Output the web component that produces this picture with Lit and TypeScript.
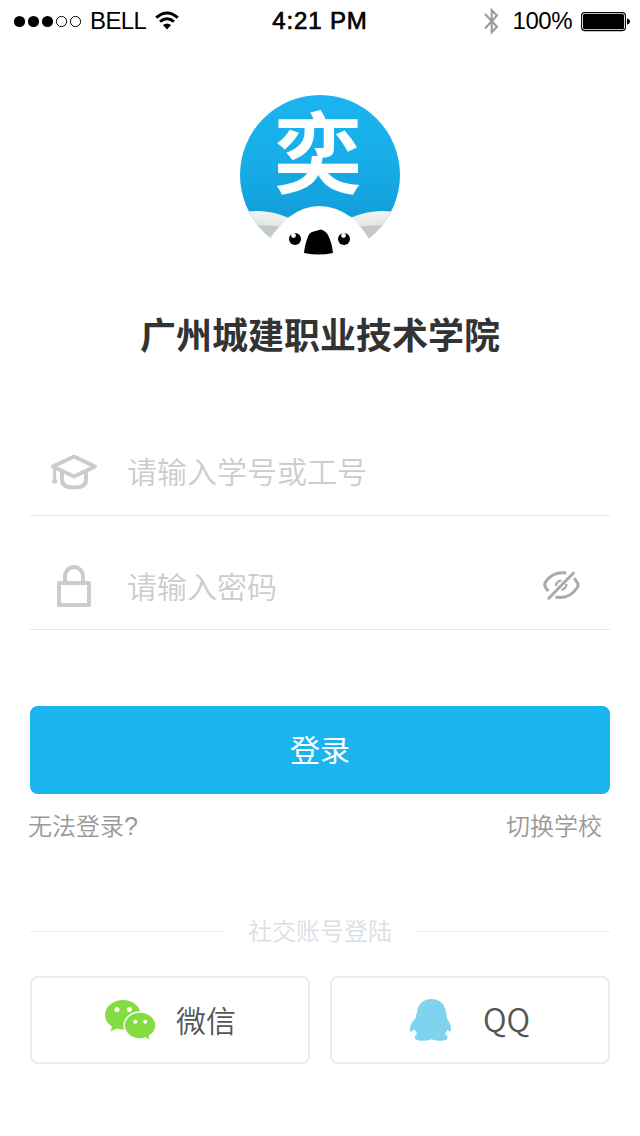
import { LitElement, html, css } from "lit";
import { customElement } from "lit/decorators.js";

@customElement("status-bar")
class StatusBar extends LitElement {
  static styles = css`
    :host { display: block; height: 40px; color: #000; font: 24px/40px "Liberation Sans", Arial, sans-serif; }
    .bar { display: grid; grid-template-columns: 1fr auto 1fr; height: 40px; }
    .left, .right { display: flex; align-items: center; }
    .left { padding-left: 13px; }
    .right { justify-content: flex-end; padding-right: 10px; }
    .dots { margin-right: 7px; }
    .carrier { padding-top: 1px; letter-spacing: -0.6px; }
    .wifi { margin-left: 8px; }
    .time { padding-top: 1px; letter-spacing: 0.85px; -webkit-text-stroke: 0.7px #000; }
    .percent { padding-top: 1px; margin: 0 9px 0 13px; letter-spacing: -0.5px; }
    svg { display: block; flex: none; }
  `;
  render() {
    return html`<div class="bar">
      <div class="left">
        <svg class="dots" width="70" height="40" viewBox="0 0 70 40">
          <circle cx="6.5" cy="20.5" r="5.6" /><circle cx="20.5" cy="20.5" r="5.6" /><circle cx="34.5" cy="20.5" r="5.6" />
          <g fill="none" stroke="#000"><circle cx="48.5" cy="20.5" r="5.1" /><circle cx="62.5" cy="20.5" r="5.1" /></g>
        </svg>
        <span class="carrier">BELL</span>
        <svg class="wifi" width="26" height="40" viewBox="0 0 26 40">
          <g fill="none" stroke="#000" stroke-width="2.9">
            <path d="M2.2 16.7Q13 7.2 23.8 16.7" /><path d="M6 20.7Q13 14.6 20 20.7" />
          </g>
          <path d="M8.9 24.1Q13 21 17.1 24.1L13 28.6Z" />
        </svg>
      </div>
      <span class="time">4:21 PM</span>
      <div class="right">
        <svg width="16" height="40" viewBox="0 0 16 40">
          <path d="M1 13L13 25.800 7.700 31.200V9.200L13 14.500 1 27.500" fill="none" stroke="#999" stroke-width="2" />
        </svg>
        <span class="percent">100%</span>
        <svg width="49" height="40" viewBox="0 0 49 40">
          <rect x=".6" y="11.6" width="43.8" height="18" rx="3" fill="none" stroke="#000" stroke-width="1.1" />
          <rect x="2" y="13" width="41" height="15.2" rx="1.5" />
          <path d="M46 17.5Q49 18.3 49 20.6T46 23.8Z" />
        </svg>
      </div>
    </div>`;
  }
}

@customElement("app-root")
class AppRoot extends LitElement {
  static styles = css`
    :host {
      display: block; width: 640px; height: 1136px; overflow: hidden; background: #fff;
      font-family: "Noto Sans CJK SC", sans-serif; font-weight: 350;
    }
    svg { display: block; flex: none; }
    .logo { margin: 55px auto 0; overflow: visible; }
    .mark { font: 700 88px "Noto Sans CJK SC", sans-serif; }
    h1 { margin: 52px 0 0; font-size: 36px; line-height: 52px; font-weight: 700; color: #333; text-align: center; }
    form { margin: 71px 30px 0; }
    .field { display: flex; align-items: center; box-sizing: border-box; border-bottom: 1px solid #e5e5e5; }
    .account { height: 86px; padding-bottom: 2px; }
    .password { height: 114px; padding-top: 26px; }
    .icon { margin-left: 20px; margin-right: 29px; }
    input {
      flex: 1; min-width: 0; height: 60px; padding: 0 0 3px; box-sizing: border-box; border: 0; outline: 0; background: none;
      font: inherit; font-size: 30px; color: #333;
    }
    .password input { padding-bottom: 1px; }
    input::placeholder { color: #ccc; opacity: 1; }
    .eye { margin-right: 29px; margin-bottom: 4px; }
    .login {
      display: block; width: 100%; height: 88px; margin-top: 76px; padding: 0 0 3px; border: 0; border-radius: 8px;
      background: #1ab4ef; color: #fff; font: inherit; font-weight: 400; font-size: 30px; line-height: 85px;
    }
    .links { display: flex; justify-content: space-between; height: 36px; margin: 13px 38px 0 28px; font-size: 24px; line-height: 36px; color: #999; }
    .query { font-family: "Liberation Sans", Arial, sans-serif; font-size: 25px; line-height: 1; }
    .divider { display: flex; align-items: center; gap: 25px; height: 36px; margin: 70px 30px 0; font-size: 24px; line-height: 34px; color: #d8e0e6; }
    .caption { padding-bottom: 2px; }
    .rule { flex: 1; height: 1px; background: #e8edf1; }
    .social { display: grid; grid-template-columns: 1fr 1fr; gap: 20px; margin: 27px 30px 0; }
    .provider {
      display: flex; align-items: center; box-sizing: border-box; height: 88px; border: 2px solid #e8edf1;
      border-radius: 8px; font-size: 30px; line-height: 44px; color: #555;
    }
    .name { padding-bottom: 3px; }
    .wechat { padding-left: 73px; gap: 20px; }
    .qq { padding-left: 77px; gap: 31px; }
    .qq .name { font-size: 32px; padding-bottom: 5px; }
  `;
  render() {
    return html`
      <status-bar></status-bar>
      <svg class="logo" width="160" height="160" viewBox="0 0 160 160">
        <defs>
          <linearGradient id="sky" x2="0" y2="1"><stop stop-color="#1bb4ef" /><stop offset=".35" stop-color="#18afe9" /><stop offset=".75" stop-color="#129fda" /></linearGradient>
          <linearGradient id="ear" x2="0" y2="1"><stop stop-color="#f4f4f4" /><stop offset=".5" stop-color="#dcdddd" /></linearGradient>
          <clipPath id="disc"><circle cx="80" cy="80" r="80" /></clipPath>
        </defs>
        <g clip-path="url(#disc)">
          <rect width="160" height="160" fill="url(#sky)" />
          <path d="M0 118Q25 112 49 123V160H0Z" fill="url(#ear)" />
          <path d="M160 118Q135 112 110 123V160H160Z" fill="url(#ear)" />
          <path d="M10 131Q25 129 44 132V160H10Z" fill="#c5c7c8" />
          <path d="M150 131Q135 129 116 132V160H150Z" fill="#c5c7c8" />
          <path d="M27 147Q30 141 42 129L50 160H29Z" fill="#ececec" />
          <path d="M130 147Q127 139 115 128L110 160H130Z" fill="#ececec" />
        </g>
        <path d="M22 162L31 144Q37 133 49 122Q79 100 111 122Q122 132 129 144L137 162Z" fill="#fff" />
        <circle cx="55" cy="144" r="6" /><circle cx="104" cy="144" r="6" />
        <circle cx="53.5" cy="140.5" r="2.4" fill="#fff" /><circle cx="103.5" cy="140.5" r="2.4" fill="#fff" />
        <path d="M64 158Q65 149 67.5 143Q69 138 72 137L81 134.5Q86 136 88 140Q92 148 93 158Q79 161 64 158Z" />
        <text class="mark" x="34" y="91" fill="#fff">奕</text>
      </svg>
      <h1>广州城建职业技术学院</h1>
      <form>
        <div class="field account">
          <svg class="icon" width="48" height="40" viewBox="0 0 48 40" fill="none" stroke="#ccc" stroke-width="4" stroke-linejoin="round">
            <path d="M3 14.5L24 4.5 45 14.5 24 24.5Z" /><path d="M12 20V28Q12 35.5 24 35.5T36 28V20" />
            <path d="M4.7 15V28" stroke-width="3" /><circle cx="4.7" cy="29" r="2.6" fill="#ccc" stroke="none" />
          </svg>
          <input type="text" placeholder="请输入学号或工号" />
        </div>
        <div class="field password">
          <svg class="icon" width="48" height="44" viewBox="0 0 48 44" fill="none" stroke="#ccc" stroke-width="4" stroke-linejoin="round">
            <rect x="9" y="19" width="30" height="22" /><path d="M15 19V12.5A9 9.5 0 0 1 33 12.5V19" />
          </svg>
          <input type="password" placeholder="请输入密码" />
          <svg class="eye" width="40" height="34" viewBox="0 0 40 34" fill="none" stroke="#aaa" stroke-width="3" stroke-linecap="round">
            <path d="M7.8 31.2L32.5 6" />
            <path d="M7.2 24.2L4.6 20.5Q2.8 17.8 4.6 15Q11.5 4.5 25.2 6" stroke-linecap="butt" />
            <path d="M33.2 11.2L36.2 15.5Q38 18 36.2 20.8Q28.5 32.5 14.500 30" stroke-linecap="butt" />
            <path d="M15 19Q15 14 20.500 13.500M25.500 17Q25.300 21.500 20.500 23" stroke-width="2.2" stroke-linecap="butt" />
          </svg>
        </div>
        <button class="login" type="button">登录</button>
      </form>
      <div class="links"><span>无法登录<span class="query">?</span></span><span>切换学校</span></div>
      <div class="divider"><span class="rule"></span><span class="caption">社交账号登陆</span><span class="rule"></span></div>
      <div class="social">
        <div class="provider wechat">
          <svg width="51" height="42" viewBox="0 0 51 42">
            <path d="M18 1C8 1 0 7.7 0 16Q0 23 7 27.5L5.5 32.5 12 29.5Q18 31.3 24 30C38 26 36 14 35.5 13C33 5 26 1 18 1Z" fill="#83dc42" />
            <path d="M35 13C26.500 13 19.200 19 19.200 26.500S26.500 40 35 40Q38 40 40.500 39L45.500 41.800 44.500 37Q51 33 51 26.500C51 19 43.500 13 35 13Z" fill="#83dc42" stroke="#fff" stroke-width="1.500" />
            <g fill="#fff"><circle cx="12" cy="10.500" r="2.500" /><circle cx="24.500" cy="10.500" r="2.500" /><circle cx="30.300" cy="22.700" r="2" /><circle cx="40.200" cy="22.700" r="2" /></g>
          </svg>
          <span class="name">微信</span>
        </div>
        <div class="provider qq">
          <svg width="43" height="44" viewBox="0 0 43 44">
            <path d="M22.500 1C13 1 8.300 7.500 8 15Q6.500 16.500 7 20C3 23 .5 28.500 1 33Q2 35 5.500 31Q6.500 34 8.500 36C5 37 5 41 8 42Q15 44 22.500 41.300Q30 44 36 42C39.500 41 39.500 37 35.500 36Q38 34 38.500 31.500Q41 35 42 32C42.300 27 40 23 37.500 20Q38.300 17 37 15C36.500 7.500 32 1 22.500 1Z" fill="#7fd3ef" />
          </svg>
          <span class="name">QQ</span>
        </div>
      </div>
    `;
  }
}
